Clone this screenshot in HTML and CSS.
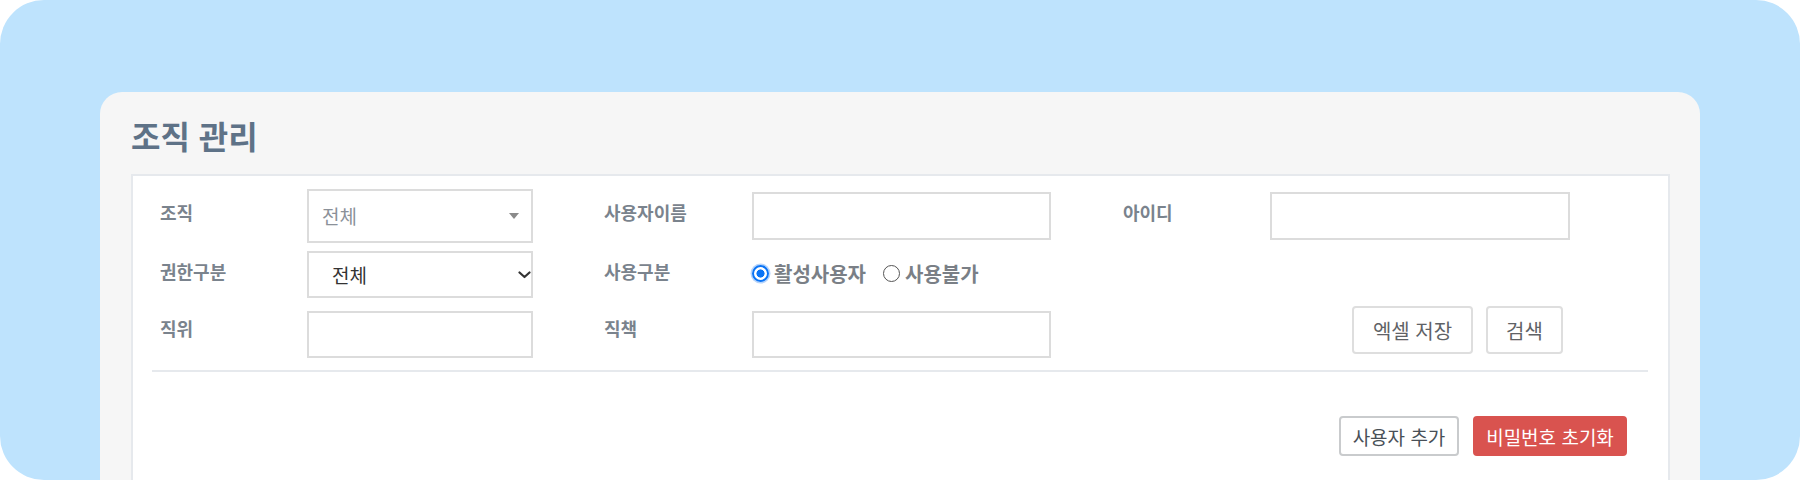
FILE: index.html
```html
<!DOCTYPE html>
<html lang="ko">
<head>
<meta charset="utf-8">
<title>조직 관리</title>
<link rel="stylesheet" href="styles.css">
</head>
<body>
<div class="screen">
  <section class="card">
    <h1 class="title">조직 관리</h1>
    <div class="panel">
      <form class="filters">
        <label class="lbl">조직</label>
        <div class="fake-select">
          <span>전체</span>
          <svg class="tri" width="10" height="6" viewBox="0 0 10 6"><path d="M0 0H10L5 6Z" fill="#8a8a8a"/></svg>
        </div>
        <label class="lbl lbl-gap">사용자이름</label>
        <input class="inp inp-top" type="text">
        <label class="lbl lbl-gap2">아이디</label>
        <input class="inp inp-top" type="text">

        <label class="lbl">권한구분</label>
        <div class="select-wrap">
          <select class="sel"><option>전체</option></select>
          <svg class="chev" width="13" height="8" viewBox="0 0 13 8"><path d="M1.5 1.5L6.5 6L11.5 1.5" fill="none" stroke="#333" stroke-width="2.2" stroke-linecap="round" stroke-linejoin="round"/></svg>
        </div>
        <label class="lbl lbl-gap">사용구분</label>
        <div class="radios">
          <label class="radio"><input type="radio" name="use" checked><span>활성사용자</span></label>
          <label class="radio"><input type="radio" name="use"><span>사용불가</span></label>
        </div>
        <div class="empty"></div>
        <div class="empty"></div>

        <label class="lbl">직위</label>
        <input class="inp inp-bottom" type="text">
        <label class="lbl lbl-gap">직책</label>
        <input class="inp inp-bottom" type="text">
        <div class="search-btns">
          <button type="button" class="btn-light btn-excel">엑셀 저장</button>
          <button type="button" class="btn-light btn-search">검색</button>
        </div>
      </form>
      <div class="divider"></div>
      <div class="actions">
        <button type="button" class="btn-outline">사용자 추가</button>
        <button type="button" class="btn-danger">비밀번호 초기화</button>
      </div>
    </div>
  </section>
</div>
</body>
</html>
```
FILE: styles.css
```css
* { box-sizing: border-box; }
html, body { margin: 0; padding: 0; background: #ffffff; }
body {
  font-family: "Noto Sans CJK KR", "Noto Sans", sans-serif;
  width: 1800px;
  height: 480px;
  overflow: hidden;
}
.screen {
  width: 1800px;
  height: 480px;
  background: #bee3fd;
  border-radius: 44px;
  overflow: hidden;
  padding: 92px 100px 0 100px;
}
.card {
  background: #f6f6f6;
  border-radius: 22px 22px 0 0;
  min-height: 500px;
  padding: 20px 30px 0 31px;
}
.title {
  margin: 0 0 16px 0;
  font-size: 32px;
  line-height: 46px;
  font-weight: 700;
  color: #5e7287;
}
.panel {
  background: #ffffff;
  border: 2px solid #e6e9ed;
  min-height: 400px;
}
.filters {
  display: grid;
  grid-template-columns: 147px 226px 219px 299px 219px 300px;
  grid-template-rows: 54px 47px 52px;
  row-gap: 8px;
  padding: 13px 0 0 27px;
  margin: 0;
}
.lbl {
  align-self: center;
  margin-bottom: 8px;
  font-size: 18px;
  font-weight: 700;
  color: #7a838d;
  line-height: 26px;
}
.lbl-gap { padding-left: 71px; }
.lbl-gap2 { padding-left: 72px; }
.fake-select {
  display: flex;
  align-items: center;
  justify-content: space-between;
  border: 2px solid #dcdcdc;
  padding: 0 12px 0 13px;
  font-size: 19px;
  color: #8b9199;
  background: #fff;
}
.fake-select span { margin-bottom: 2px; }
.select-wrap {
  display: grid;
}
.sel {
  grid-area: 1 / 1;
  appearance: none;
  -webkit-appearance: none;
  border: 2px solid #dcdcdc;
  border-radius: 0;
  background: #fff;
  font-family: inherit;
  font-size: 19px;
  color: #333;
  padding: 0 30px 0 23px;
  outline: none;
}
.chev {
  grid-area: 1 / 1;
  justify-self: end;
  align-self: center;
  margin-right: 2px;
  pointer-events: none;
}
.inp {
  height: 48px;
  border: 2px solid #dcdcdc;
  border-radius: 0;
  background: #fff;
  font-family: inherit;
  font-size: 18px;
  padding: 0 10px;
  outline: none;
}
.inp-top { align-self: center; }
.inp-bottom { align-self: end; height: 47px; }
.radios {
  display: flex;
  align-items: center;
  gap: 17px;
  align-self: center;
  margin-bottom: 3px;
}
.radio {
  display: flex;
  align-items: center;
  gap: 5px;
  font-size: 20px;
  font-weight: 700;
  color: #7a7f86;
}
.radio input {
  appearance: none;
  -webkit-appearance: none;
  margin: 0;
  width: 17px;
  height: 17px;
  border-radius: 50%;
  border: 1.5px solid #555;
  background: #fff;
}
.radio input:checked {
  border: 2px solid #0b74f5;
  background: radial-gradient(circle, #0b74f5 0 3.8px, #ffffff 4.3px);
  box-shadow: 0 0 0 1.5px #b6d4fb;
}
.search-btns {
  grid-column: 5 / 7;
  justify-self: end;
  align-self: start;
  margin-right: 7px;
  display: flex;
  gap: 13px;
}
.btn-light {
  height: 48px;
  padding: 0;
  border: 2px solid #dedede;
  border-radius: 4px;
  background: #fff;
  font-family: inherit;
  font-size: 20px;
  color: #5f6266;
  text-align: center;
}
.btn-excel { width: 121px; }
.btn-search { width: 77px; }
.divider {
  height: 2px;
  background: #e6e9ed;
  margin: 12px 20px 0 19px;
}
.actions {
  display: flex;
  justify-content: flex-end;
  gap: 14px;
  padding: 44px 41px 0 0;
}
.btn-outline, .btn-danger {
  height: 40px;
  border-radius: 4px;
  font-family: inherit;
  font-size: 19px;
}
.btn-outline {
  width: 120px;
  padding: 0;
  background: #fff;
  border: 2px solid #c9cbcd;
  color: #495057;
}
.btn-danger {
  width: 154px;
  padding: 0;
  background: #d9534f;
  border: 2px solid #d9534f;
  color: #ffffff;
}
```
